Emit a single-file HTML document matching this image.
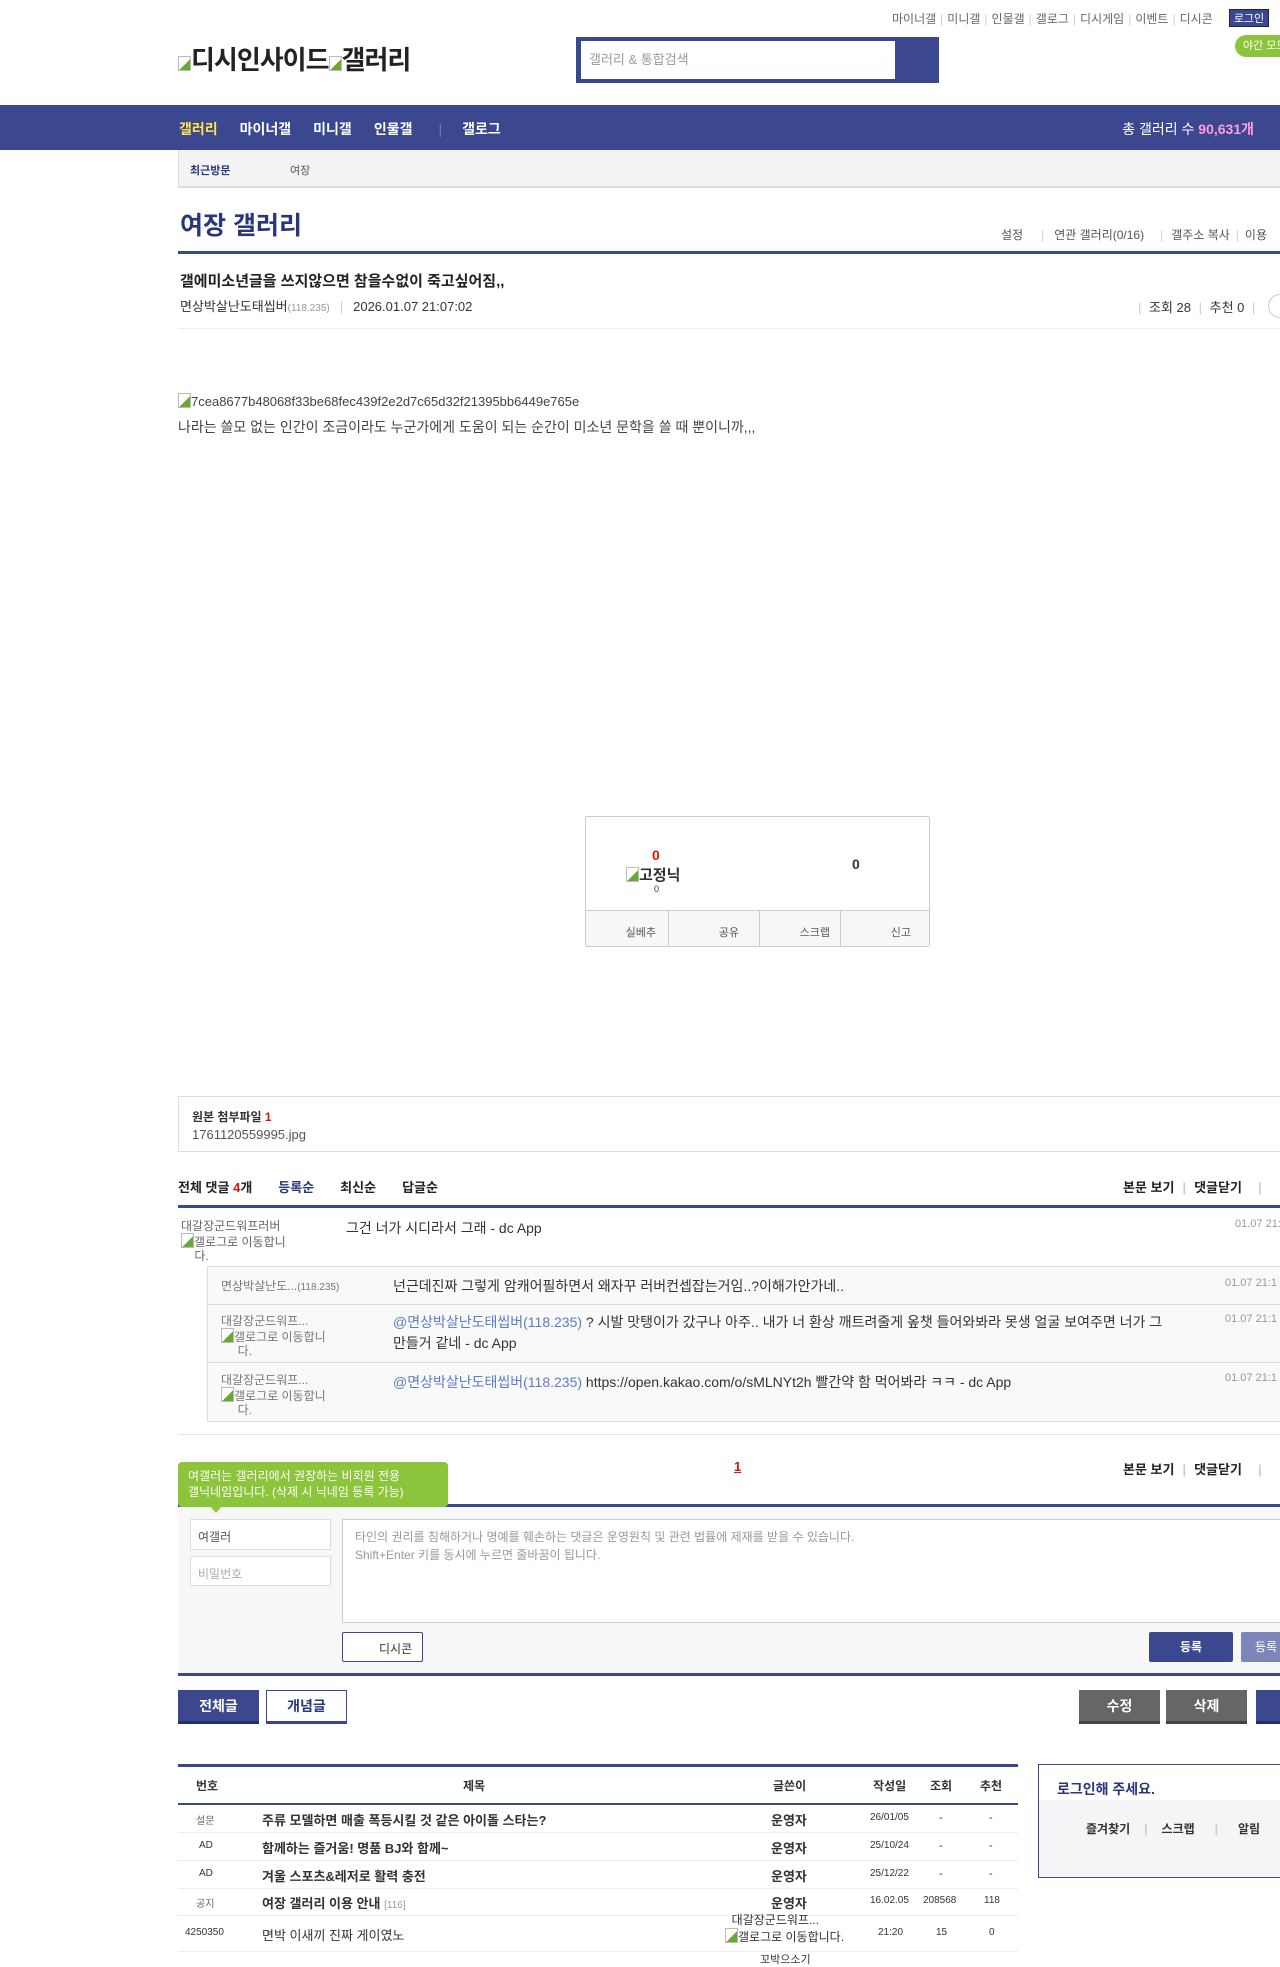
<!DOCTYPE html>
<html><head><meta charset="utf-8"><style>
*{margin:0;padding:0;box-sizing:border-box}
body{width:1280px;height:1960px;position:relative;overflow:hidden;background:#fff;font-family:"Liberation Sans","Noto Sans CJK KR",sans-serif;color:#333;font-size:12px}
.a{position:absolute;white-space:nowrap}
.b{font-weight:bold}
.navy{background:#3b4890}
.sep{color:#ccc;margin:0 4px}
.img{display:inline-block;width:13px;height:15px;border:1px solid #bbb;vertical-align:-2px;background:linear-gradient(135deg,#fff 55%,#6a3 55%)}
</style></head><body>
<!-- top links -->
<div class="a" style="left:892px;top:10px;font-size:12px;color:#666">마이너갤<span class="sep">|</span>미니갤<span class="sep">|</span>인물갤<span class="sep">|</span>갤로그<span class="sep">|</span>디시게임<span class="sep">|</span>이벤트<span class="sep">|</span>디시콘</div>
<div class="a navy" style="left:1229px;top:9px;width:40px;height:18px;color:#fff;font-size:11px;line-height:18px;text-align:center;border:1px solid #223">로그인</div>
<div class="a" style="left:1235px;top:35px;width:60px;height:22px;border-radius:11px;background:#8cc43b;color:#fff;font-size:11px;line-height:22px;padding-left:8px">야간 모드</div>
<div class="a b" style="left:178px;top:40px;font-size:26px;color:#222;letter-spacing:-1px"><span class="img"></span>디시인사이드<span class="img"></span>갤러리</div>
<div class="a navy" style="left:576px;top:37px;width:363px;height:46px"></div>
<div class="a" style="left:581px;top:41px;width:314px;height:38px;background:#fff;color:#999;font-size:13px;line-height:38px;padding-left:8px">갤러리 &amp; 통합검색</div>
<!-- nav -->
<div class="a navy" style="left:0;top:105px;width:1280px;height:45px"></div>
<div class="a b" style="left:179px;top:119px;font-size:14px;color:#fff">
<span style="color:#ffe34c">갤러리</span><span style="margin-left:22px">마이너갤</span><span style="margin-left:22px">미니갤</span><span style="margin-left:22px">인물갤</span><span style="margin-left:26px;color:#6a75b5;font-weight:normal">|</span><span style="margin-left:20px">갤로그</span></div>
<div class="a" style="right:26px;top:119px;font-size:14px;color:#fff">총 갤러리 수 <b style="color:#ff9de0">90,631개</b></div>
<!-- subbar -->
<div class="a" style="left:178px;top:150px;width:1102px;height:38px;background:#f3f3f3;border-left:1px solid #ddd;border-bottom:2px solid #ddd"></div>
<div class="a b" style="left:190px;top:162px;font-size:11px;color:#29367c">최근방문</div>
<div class="a" style="left:290px;top:162px;font-size:11px;color:#555">여장</div>
<!-- title -->
<div class="a b" style="left:180px;top:206px;font-size:25px;color:#29367c">여장 갤러리</div>
<div class="a" style="left:1001px;top:226px;font-size:12px;color:#555">설정<span class="sep" style="margin:0 10px 0 18px">|</span>연관 갤러리(0/16)<span class="sep" style="margin:0 8px 0 16px">|</span>갤주소 복사<span class="sep" style="margin:0 6px">|</span>이용</div>
<div class="a navy" style="left:178px;top:251px;width:1102px;height:3px"></div>
<div class="a b" style="left:180px;top:270px;font-size:15px;color:#222">갤에미소년글을 쓰지않으면 참을수없이 죽고싶어짐,,</div>
<div class="a" style="left:180px;top:296px;font-size:13px;color:#333">면상박살난도태씹버<span style="font-size:10px;color:#999">(118.235)</span><span class="sep" style="margin:0 10px">|</span>2026.01.07 21:07:02</div>
<div class="a" style="left:1134px;top:297px;font-size:13px;color:#333"><span class="sep">|</span> 조회 28 <span class="sep">|</span> 추천 0 <span class="sep">|</span></div>
<div class="a" style="left:1268px;top:294px;width:24px;height:24px;border-radius:12px;border:1px solid #ccc"></div>
<div class="a" style="left:178px;top:328px;width:1102px;height:1px;background:#eee"></div>
<div class="a" style="left:178px;top:393px;font-size:13px;color:#444"><span class="img"></span>7cea8677b48068f33be68fec439f2e2d7c65d32f21395bb6449e765e</div>
<div class="a" style="left:178px;top:417px;font-size:14px;color:#444">나라는 쓸모 없는 인간이 조금이라도 누군가에게 도움이 되는 순간이 미소년 문학을 쓸 때 뿐이니까,,,</div>
<!-- rec box -->
<div class="a" style="left:585px;top:816px;width:345px;height:131px;border:1px solid #ccc;border-radius:2px"></div>
<div class="a b" style="left:652px;top:847px;font-size:14px;color:#d31900">0</div>
<div class="a b" style="left:626px;top:864px;font-size:15px;color:#333"><span class="img"></span>고정닉</div>
<div class="a" style="left:654px;top:884px;font-size:9px;color:#333">0</div>
<div class="a b" style="left:852px;top:856px;font-size:14px;color:#333">0</div>
<div class="a" style="left:586px;top:910px;width:343px;height:36px;background:#f7f7f7;border-top:1px solid #ccc;display:flex;font-size:11px;color:#555">
<div style="flex:1;border-right:1px solid #ccc;text-align:right;padding:13px 12px 0 0">실베추</div><div style="flex:1;border-right:1px solid #ccc;text-align:right;padding:13px 20px 0 0">공유</div><div style="flex:1;border-right:1px solid #ccc;text-align:right;padding:13px 10px 0 0">스크랩</div><div style="flex:1;text-align:right;padding:13px 18px 0 0">신고</div></div>
<!-- attachment -->
<div class="a" style="left:178px;top:1096px;width:1110px;height:56px;border:1px solid #ddd"></div>
<div class="a b" style="left:192px;top:1108px;font-size:12px;color:#333">원본 첨부파일 <span style="color:#d31900">1</span></div>
<div class="a" style="left:192px;top:1127px;font-size:13px;color:#555">1761120559995.jpg</div>
<!-- comments header -->
<div class="a b" style="left:178px;top:1177px;font-size:13px;color:#222">전체 댓글 <span style="color:#d31900">4</span>개<span style="margin-left:26px;color:#29367c">등록순</span><span style="margin-left:26px">최신순</span><span style="margin-left:26px">답글순</span></div>
<div class="a b" style="left:1123px;top:1177px;font-size:13px;color:#222">본문 보기<span class="sep" style="margin:0 8px">|</span>댓글닫기<span class="sep" style="margin-left:16px">|</span></div>
<div class="a navy" style="left:178px;top:1205px;width:1102px;height:3px"></div>
<div class="a" style="left:181px;top:1219px;font-size:12px;color:#666;line-height:14px">대갈장군드워프러버<br><span class="img"></span>갤로그로 이동합니<br>&nbsp;&nbsp;&nbsp;&nbsp;다.</div>
<div class="a" style="left:346px;top:1218px;font-size:14px;color:#333">그건 너가 시디라서 그래 - dc App</div>
<div class="a" style="left:1235px;top:1218px;font-size:11px;color:#999">01.07 21:1</div>
<div class="a" style="left:207px;top:1266px;width:1080px;height:156px;border:1px solid #ddd;background:#f9f9f9"></div>
<div class="a" style="left:207px;top:1304px;width:1080px;height:1px;background:#ddd"></div>
<div class="a" style="left:207px;top:1362px;width:1080px;height:1px;background:#ddd"></div>
<div class="a" style="left:221px;top:1277px;font-size:12px;color:#777">면상박살난도...<span style="font-size:10px">(118.235)</span></div>
<div class="a" style="left:393px;top:1276px;font-size:14px;color:#333">넌근데진짜 그렇게 암캐어필하면서 왜자꾸 러버컨셉잡는거임..?이해가안가네..</div>
<div class="a" style="left:1225px;top:1277px;font-size:11px;color:#999">01.07 21:1</div>
<div class="a" style="left:221px;top:1314px;font-size:12px;color:#777;line-height:14px">대갈장군드워프...<br><span class="img"></span>갤로그로 이동합니<br>&nbsp;&nbsp;&nbsp;&nbsp;&nbsp;다.</div>
<div class="a" style="left:393px;top:1312px;font-size:14px;color:#333;line-height:21px;white-space:normal;width:775px"><span style="color:#5b7bc6">@면상박살난도태씹버(118.235)</span> ? 시발 맛탱이가 갔구나 아주.. 내가 너 환상 깨트려줄게 옾챗 들어와봐라 못생 얼굴 보여주면 너가 그 만들거 같네 - dc App</div>
<div class="a" style="left:1225px;top:1313px;font-size:11px;color:#999">01.07 21:1</div>
<div class="a" style="left:221px;top:1373px;font-size:12px;color:#777;line-height:14px">대갈장군드워프...<br><span class="img"></span>갤로그로 이동합니<br>&nbsp;&nbsp;&nbsp;&nbsp;&nbsp;다.</div>
<div class="a" style="left:393px;top:1372px;font-size:14px;color:#333"><span style="color:#5b7bc6">@면상박살난도태씹버(118.235)</span> https://open.kakao.com/o/sMLNYt2h 빨간약 함 먹어봐라 ㅋㅋ - dc App</div>
<div class="a" style="left:1225px;top:1372px;font-size:11px;color:#999">01.07 21:1</div>
<div class="a" style="left:178px;top:1434px;width:1102px;height:1px;background:#e5e5e5"></div>
<div class="a b" style="left:734px;top:1459px;font-size:13px;color:#d31900;text-decoration:underline">1</div>
<div class="a b" style="left:1123px;top:1459px;font-size:13px;color:#222">본문 보기<span class="sep" style="margin:0 8px">|</span>댓글닫기<span class="sep" style="margin-left:16px">|</span></div>
<!-- write -->
<div class="a" style="left:178px;top:1504px;width:1102px;height:172px;background:#f7f7f8;border-top:3px solid #3b4890;border-bottom:3px solid #3b4890"></div>
<div class="a" style="left:178px;top:1462px;width:270px;height:45px;background:#8cc43b;border-radius:4px;color:#fff;font-size:12px;line-height:16px;padding:6px 0 0 10px;white-space:normal">여갤러는 갤러리에서 권장하는 비회원 전용<br>갤닉네임입니다. (삭제 시 닉네임 등록 가능)</div>
<div class="a" style="left:210px;top:1506px;width:0;height:0;border-left:6px solid transparent;border-right:6px solid transparent;border-top:7px solid #8cc43b"></div>
<div class="a" style="left:190px;top:1519px;width:141px;height:31px;background:#fff;border:1px solid #ddd;font-size:12px;color:#555;padding:8px 0 0 7px">여갤러</div>
<div class="a" style="left:190px;top:1556px;width:141px;height:30px;background:#fff;border:1px solid #ddd;font-size:12px;color:#aaa;padding:8px 0 0 7px">비밀번호</div>
<div class="a" style="left:342px;top:1519px;width:940px;height:104px;background:#fff;border:1px solid #ccc;font-size:12px;color:#999;line-height:18px;padding:8px 0 0 12px">타인의 권리를 침해하거나 명예를 훼손하는 댓글은 운영원칙 및 관련 법률에 제재를 받을 수 있습니다.<br>Shift+Enter 키를 동시에 누르면 줄바꿈이 됩니다.</div>
<div class="a" style="left:342px;top:1632px;width:81px;height:30px;background:#fff;border:1px solid #3b4890;border-radius:2px;font-size:12px;color:#333;padding:7px 0 0 36px">디시콘</div>
<div class="a navy" style="left:1149px;top:1632px;width:84px;height:30px;border-radius:2px;color:#fff;font-size:12px;text-align:center;line-height:30px;font-weight:bold">등록</div>
<div class="a" style="left:1241px;top:1632px;width:60px;height:30px;border-radius:2px;background:#7c86b8;color:#fff;font-size:12px;line-height:30px;padding-left:14px">등록</div>
<!-- buttons -->
<div class="a navy" style="left:178px;top:1690px;width:81px;height:34px;border-bottom:3px solid #222d6b;color:#fff;font-size:14px;font-weight:bold;text-align:center;line-height:32px">전체글</div>
<div class="a" style="left:266px;top:1690px;width:81px;height:34px;border:1px solid #3b4890;border-bottom:3px solid #3b4890;color:#29367c;font-size:14px;font-weight:bold;text-align:center;line-height:30px">개념글</div>
<div class="a" style="left:1079px;top:1690px;width:81px;height:34px;background:#666;border-bottom:3px solid #444;color:#fff;font-size:14px;font-weight:bold;text-align:center;line-height:32px">수정</div>
<div class="a" style="left:1166px;top:1690px;width:81px;height:34px;background:#666;border-bottom:3px solid #444;color:#fff;font-size:14px;font-weight:bold;text-align:center;line-height:32px">삭제</div>
<div class="a navy" style="left:1256px;top:1690px;width:40px;height:34px;border-bottom:3px solid #222d6b"></div>
<!-- table -->
<div class="a navy" style="left:178px;top:1764px;width:840px;height:3px"></div>
<div class="a navy" style="left:178px;top:1803px;width:840px;height:2px"></div>
<div class="a b" style="left:0;top:1777px;width:1280px;font-size:12px;color:#333">
<span class="a" style="left:196px">번호</span><span class="a" style="left:463px">제목</span><span class="a" style="left:773px">글쓴이</span><span class="a" style="left:873px">작성일</span><span class="a" style="left:930px">조회</span><span class="a" style="left:980px">추천</span></div>
<div class="a" style="left:178px;top:1832px;width:840px;height:1px;background:#eee"></div>
<div class="a" style="left:178px;top:1860px;width:840px;height:1px;background:#eee"></div>
<div class="a" style="left:178px;top:1888px;width:840px;height:1px;background:#eee"></div>
<div class="a" style="left:178px;top:1915px;width:840px;height:1px;background:#eee"></div>
<div class="a" style="left:178px;top:1951px;width:840px;height:1px;background:#eee"></div>
<div style="font-size:11px;color:#333">
<span class="a" style="left:196px;top:1812px;font-size:10px;color:#666">설문</span><span class="a b" style="left:262px;top:1810px;font-size:13px">주류 모델하면 매출 폭등시킬 것 같은 아이돌 스타는?</span><span class="a b" style="left:771px;top:1810px;font-size:13px">운영자</span><span class="a" style="left:870px;top:1812px;font-size:10px">26/01/05</span><span class="a" style="left:939px;top:1812px">-</span><span class="a" style="left:989px;top:1812px">-</span>
<span class="a" style="left:199px;top:1840px;font-size:10px">AD</span><span class="a b" style="left:262px;top:1838px;font-size:13px">함께하는 즐거움! 명품 BJ와 함께~</span><span class="a b" style="left:771px;top:1838px;font-size:13px">운영자</span><span class="a" style="left:870px;top:1840px;font-size:10px">25/10/24</span><span class="a" style="left:939px;top:1840px">-</span><span class="a" style="left:989px;top:1840px">-</span>
<span class="a" style="left:199px;top:1868px;font-size:10px">AD</span><span class="a b" style="left:262px;top:1866px;font-size:13px">겨울 스포츠&amp;레저로 활력 충전</span><span class="a b" style="left:771px;top:1866px;font-size:13px">운영자</span><span class="a" style="left:870px;top:1868px;font-size:10px">25/12/22</span><span class="a" style="left:939px;top:1868px">-</span><span class="a" style="left:989px;top:1868px">-</span>
<span class="a" style="left:196px;top:1895px;font-size:10px;color:#666">공지</span><span class="a b" style="left:262px;top:1893px;font-size:13px">여장 갤러리 이용 안내 <span style="font-weight:normal;color:#999;font-size:10px">[116]</span></span><span class="a b" style="left:771px;top:1893px;font-size:13px">운영자</span><span class="a" style="left:870px;top:1895px;font-size:10px">16.02.05</span><span class="a" style="left:923px;top:1895px;font-size:10px">208568</span><span class="a" style="left:984px;top:1895px;font-size:10px">118</span>
<span class="a" style="left:185px;top:1927px;font-size:10px">4250350</span><span class="a" style="left:262px;top:1925px;font-size:13px">면박 이새끼 진짜 게이였노</span><span class="a" style="left:725px;top:1913px;font-size:12px;line-height:15px">&nbsp;&nbsp;대갈장군드워프...<br><span class="img"></span>갤로그로 이동합니다.</span><span class="a" style="left:878px;top:1927px;font-size:10px">21:20</span><span class="a" style="left:936px;top:1927px;font-size:10px">15</span><span class="a" style="left:989px;top:1927px;font-size:10px">0</span>
<span class="a" style="left:760px;top:1951px;font-size:11px">꼬박으소기</span>
</div>
<!-- login box -->
<div class="a" style="left:1038px;top:1764px;width:250px;height:114px;border:1px solid #3b4890"></div>
<div class="a" style="left:1039px;top:1800px;width:250px;height:77px;background:#f5f5f7"></div>
<div class="a b" style="left:1057px;top:1779px;font-size:14px;color:#29367c">로그인해 주세요.</div>
<div class="a b" style="left:1086px;top:1820px;font-size:12px;color:#333">즐겨찾기<span class="sep" style="margin:0 14px">|</span>스크랩<span class="sep" style="margin:0 20px">|</span>알림</div>
</body></html>
